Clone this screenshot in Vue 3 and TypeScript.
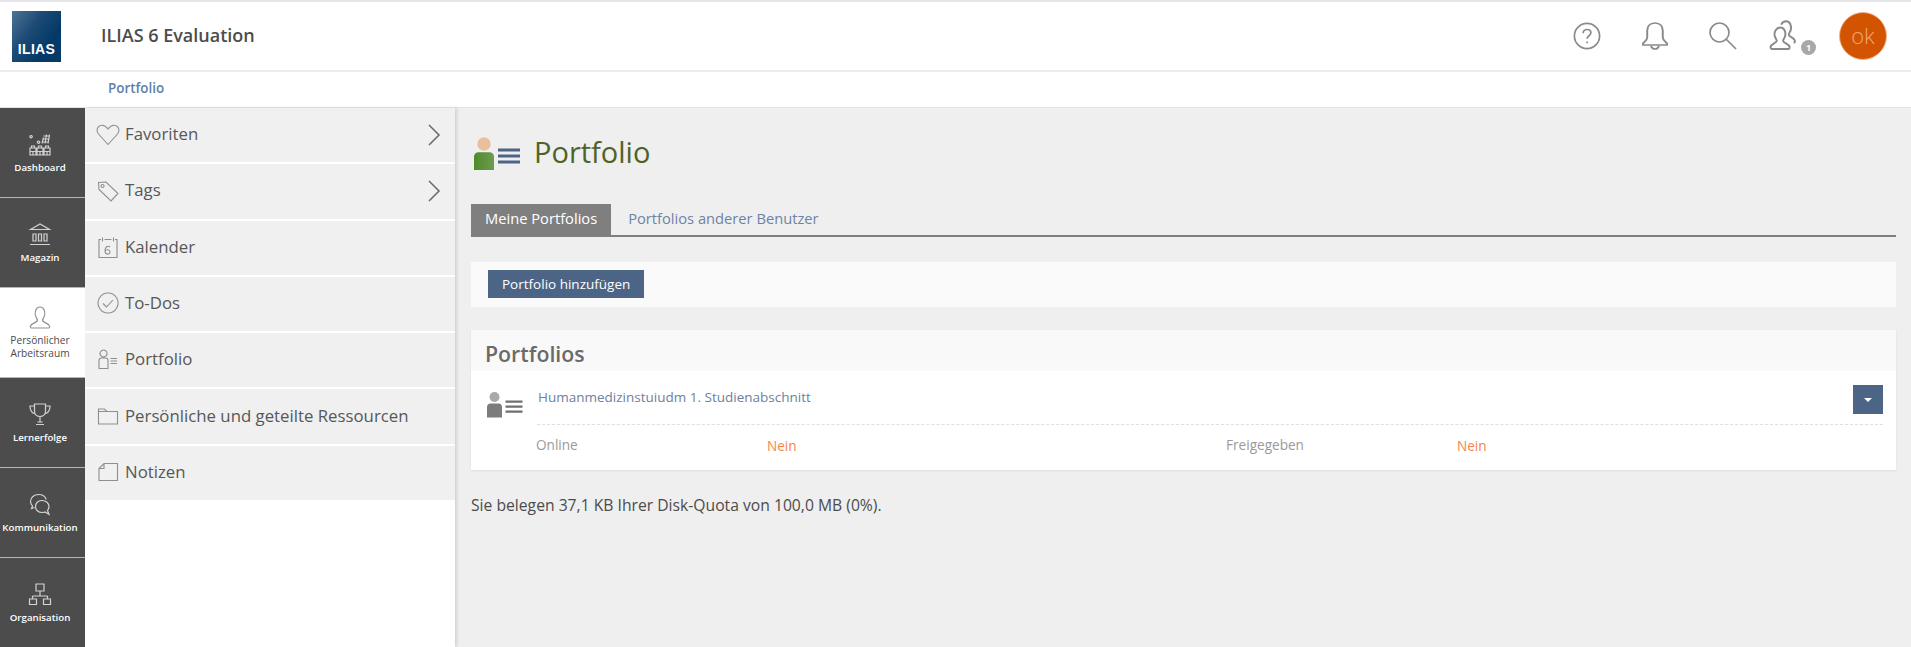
<template>
  <div class="page">
    <header class="topbar">
      <div class="logo"><span>ILIAS</span></div>
      <div class="site-title">ILIAS 6 Evaluation</div>
      <div class="meta">
        <svg class="meta-icon help" width="28" height="28" viewBox="0 0 28 28">
          <circle cx="14" cy="14" r="12.6" />
          <path d="M10.2 11.2c0-2.3 1.7-3.7 3.9-3.7s3.8 1.3 3.8 3.3c0 3-3.8 2.9-3.8 6" />
          <path d="M14.1 19.4v1.8" />
        </svg>
        <svg class="meta-icon bell" width="32" height="32" viewBox="0 0 28 32" preserveAspectRatio="none">
          <path d="M14 3c-4.600 0-6.800 3.500-6.800 7.500v7c0 2.500-2.200 4-3.700 5.800v1.700h21v-1.700c-1.500-1.800-3.700-3.300-3.700-5.800v-7C20.800 6.500 18.600 3 14 3z" />
          <path d="M10.500 26c.6 2 1.800 3 3.500 3s2.900-1 3.500-3" />
        </svg>
        <svg class="meta-icon search" width="30" height="30" viewBox="0 0 30 30">
          <circle cx="11.500" cy="11.500" r="9.500" />
          <path d="M18.500 18.500l9.500 9.500" />
        </svg>
        <div class="users">
          <svg class="meta-icon" width="34" height="34" viewBox="0 0 30 30">
            <path d="M4.500 26.500h14.500c1 0 1-1 .9-2-.5-2.500-5.200-3.200-5.700-5-.2-1 1.300-2.500 1.800-4.500.8-3.500-.8-7.500-4.300-7.500S6 11.500 6.800 15c.5 2 2 3.500 1.800 4.500-.5 1.800-4.900 2.500-5.400 5-.1 1 .3 2 1.300 2z" />
            <path d="M12.500 5c.8-1.800 2.200-3 4.300-3 3.500 0 5 4 4.200 7.500-.5 2-2 3.500-1.800 4.500.4 1.800 4.300 2.300 5.300 4.800.4 1 .2 2-1 2.200" />
          </svg>
          <span class="badge">1</span>
        </div>
        <div class="avatar">ok</div>
      </div>
    </header>

    <div class="crumbs"><a>Portfolio</a></div>

    <div class="body">
      <nav class="mainbar">
        <a v-for="item in mainItems" :key="item.label" class="main-item" :class="{ active: item.active }">
          <svg width="24" height="24" viewBox="0 0 24 24" class="main-icon">
            <path :d="item.icon" />
          </svg>
          <span>{{ item.label }}</span>
        </a>
      </nav>

      <aside class="slate">
        <a v-for="entry in slateItems" :key="entry.label" class="slate-row">
          <svg width="24" height="24" viewBox="0 0 24 24" class="slate-icon">
            <path :d="entry.icon" />
          </svg>
          <span class="slate-label">{{ entry.label }}</span>
          <svg v-if="entry.more" width="14" height="22" viewBox="0 0 14 22" class="chevron">
            <path d="M2 1l10 10L2 21" />
          </svg>
        </a>
      </aside>

      <main class="content">
        <div class="head">
          <svg class="head-icon" width="46" height="34" viewBox="0 0 46 34">
            <defs>
              <linearGradient id="torso" x1="0" y1="0" x2="1" y2="0">
                <stop offset="0" stop-color="#4d8b2b" />
                <stop offset="1" stop-color="#6f9a50" />
              </linearGradient>
            </defs>
            <circle cx="10" cy="7" r="6.700" fill="#e9bf9e" />
            <path d="M0 33V20c0-3.500 2.500-4.800 5-4.800h10c2.500 0 5 1.300 5 4.800v13z" fill="url(#torso)" />
            <path d="M24 11.500h22v3H24zM24 17.500h22v3H24zM24 23.500h22v3H24z" fill="#4c6586" />
          </svg>
          <h1>Portfolio</h1>
        </div>

        <div class="tabs">
          <a class="tab current">Meine Portfolios</a>
          <a class="tab">Portfolios anderer Benutzer</a>
        </div>

        <div class="toolbar">
          <button type="button" class="btn">Portfolio hinzufügen</button>
        </div>

        <section class="panel">
          <h2>Portfolios</h2>
          <div class="entry">
            <svg class="entry-icon" width="36" height="26" viewBox="0 0 36 26">
              <circle cx="7.500" cy="5" r="5" fill="#a9a9a9" />
              <path d="M0 25.500V15c0-2.500 1.800-3.500 3.500-3.500h8c1.700 0 3.500 1 3.500 3.500v10.500z" fill="#7c7c7c" />
              <path d="M18.500 8.500h17v2.200h-17zM18.500 13.500h17v2.200h-17zM18.500 18.500h17v2.200h-17z" fill="#6f6f6f" />
            </svg>
            <div class="entry-body">
              <div class="entry-top">
                <a class="entry-link">Humanmedizinstuiudm 1. Studienabschnitt</a>
                <button type="button" class="caret-btn"><i></i></button>
              </div>
              <div class="props">
                <span class="prop-name">Online</span>
                <span class="prop-value">Nein</span>
                <span class="prop-name">Freigegeben</span>
                <span class="prop-value">Nein</span>
              </div>
            </div>
          </div>
        </section>

        <p class="quota">Sie belegen 37,1 KB Ihrer Disk-Quota von 100,0 MB (0%).</p>
      </main>
    </div>
  </div>
</template>

<script setup lang="ts">
interface MainItem {
  label: string;
  icon: string;
  active?: boolean;
}

interface SlateItem {
  label: string;
  icon: string;
  more?: boolean;
}

const mainItems: MainItem[] = [
  {
    label: "Dashboard",
    icon: "M2 16h6v7H2zM9 16h6v7H9zM16 16h6v7h-6zM3.500 16v-2h3v2M10.500 16v-2h3v2M17.500 16v-2h3v2M2 19.500h20M5 19.500V23M12 19.500V23M19 19.500V23M3 3.500a1.200 1.200 0 1 0 .1 0zM10.500 9a1.200 1.200 0 1 0 .1 0zM14 11.500l1.500-6M17 11.500l1.500-9M20 11.500l1.500-9M14.500 7h7M14 10h7M15.500 4h6",
  },
  {
    label: "Magazin",
    icon: "M2.500 7.500L12 2l9.500 5.500zM5 12h3v7H5zM10.500 12h3v7h-3zM16 12h3v7h-3zM2 22.500h20",
  },
  {
    label: "Persönlicher Arbeitsraum",
    active: true,
    icon: "M3.500 23h17c1 0 1.200-1 1-2-.6-2.700-6.500-3.400-7-5.500-.2-1 1.500-2.800 2.100-5.100C17.500 6.300 15.700 2 12 2S6.500 6.300 7.400 10.400c.6 2.300 2.300 4.100 2.100 5.100-.5 2.100-6.400 2.800-7 5.500-.2 1 0 2 1 2z",
  },
  {
    label: "Lernerfolge",
    icon: "M6.500 2h11v7c0 3.500-2.500 5.500-5.500 5.500S6.500 12.500 6.500 9zM6.500 4H2c0 4 2 7 5.500 8M17.500 4H22c0 4-2 7-5.500 8M12 14.500V20M9.500 20h5M8 22.500h8",
  },
  {
    label: "Kommunikation",
    icon: "M6.500 15.500l-3 1 1-2.500C3 12.500 2.500 11 2.500 9.500 2.500 5.500 6 2.500 10.500 2.500c3.700 0 6.700 2 7.700 5M14 8.500c4 0 7 2.500 7 6 0 1.500-.5 2.800-1.500 3.800l1.500 4-4-2.300c-1 .4-2 .5-3 .5-3.800 0-6.500-2.700-6.500-6s2.700-6 6-6z",
  },
  {
    label: "Organisation",
    icon: "M8 2h8v7H8zM12 9v5M4.500 14h15M4.500 14v3M19.500 14v3M1.500 17h7v5.500h-7zM15.500 17h7v5.500h-7z",
  },
];

const slateItems: SlateItem[] = [
  {
    label: "Favoriten",
    more: true,
    icon: "M12 22.500L2.500 12C.2 9.200.8 5.500 3.500 4s5.500-1 8.500 3c3-4 5.800-4.500 8.500-3s3.300 5.200 1 8z",
  },
  {
    label: "Tags",
    more: true,
    icon: "M2.500 4.500l7.500-.5 12 11.500-7 7.500L3 11.500zM6.500 6.500a1.500 1.500 0 1 0 .1 0z",
  },
  {
    label: "Kalender",
    icon: "M5 4.500H3v18h18v-18h-2M8.500 4.500h7M6.500 2.500v4M17.500 2.500v4M14 12c-1.500-1.500-5-1-5 4 0 4 5 4 5 1 0-2.500-4-3-5-1",
  },
  {
    label: "To-Dos",
    icon: "M12 2a10 10 0 1 0 .1 0zM7 12.500l3.500 3.500L17 9",
  },
  {
    label: "Portfolio",
    icon: "M7.500 3a3.500 3.500 0 1 0 .1 0zM3 21.500v-8c0-2 1-2.500 2.500-2.500h4c1.500 0 2.500.5 2.500 2.500v8zM14.500 11.500H21M14.500 14H21M14.500 16.500H21",
  },
  {
    label: "Persönliche und geteilte Ressourcen",
    icon: "M2.500 20V5h6l2.500 2.500h10.500V20zM2.500 7.500h8.500",
  },
  {
    label: "Notizen",
    icon: "M8 3.500h13.500v17H3V8.500zM8 3.500v5H3",
  },
];
</script>

<style>
html,
body {
  margin: 0;
  background: #fff;
}
</style>

<style scoped>
.page {
  width: 1911px;
  height: 647px;
  overflow: hidden;
  font-family: "Open Sans", "Noto Sans", sans-serif;
  color: #4c4c4c;
}

.topbar {
  height: 72px;
  box-sizing: border-box;
  border-top: 2px solid #e5e5ea;
  border-bottom: 2px solid #ececec;
  display: flex;
  align-items: center;
  padding-left: 12px;
  background: #fff;
}

.logo {
  width: 49px;
  height: 51px;
  box-sizing: border-box;
  background: linear-gradient(125deg, #4f7496 0%, #1c4a75 38%, #043a68 70%);
  display: flex;
  align-items: flex-end;
  justify-content: center;
  padding-bottom: 5px;
  color: #fff;
  font: 700 14px "Liberation Sans", Arial, sans-serif;
  letter-spacing: 0.3px;
}

.site-title {
  margin-left: 40px;
  margin-top: -2px;
  font-size: 18px;
  font-weight: 600;
  color: #4c4c4c;
}

.meta {
  margin-left: auto;
  display: flex;
  align-items: center;
  padding-right: 24px;
}

.meta-icon {
  display: block;
  fill: none;
  stroke: #8a8a8a;
  stroke-width: 1.7;
}

.help {
  margin-right: 38px;
}

.bell {
  margin-right: 37px;
}

.search {
  margin-right: 29px;
}

.users {
  position: relative;
  width: 34px;
  height: 34px;
  margin-right: 38px;
}

.badge {
  position: absolute;
  right: -15px;
  bottom: -2px;
  width: 15px;
  height: 15px;
  border-radius: 50%;
  background: #a8a8a8;
  color: #fff;
  font-size: 9px;
  font-weight: 700;
  line-height: 15px;
  text-align: center;
}

.avatar {
  width: 48px;
  height: 48px;
  box-sizing: border-box;
  border-radius: 50%;
  background: #d35400;
  border: 1px solid #f0b48c;
  color: #f0a878;
  font-size: 22px;
  font-weight: 300;
  line-height: 45px;
  text-align: center;
}

.crumbs {
  height: 36px;
  box-sizing: border-box;
  border-bottom: 1px solid #e4e4e4;
  padding-left: 108px;
  line-height: 33px;
  font-size: 13.4px;
  font-weight: 600;
  color: #5f7fa8;
}

.body {
  display: flex;
  height: 539px;
}

.mainbar {
  width: 85px;
  flex: none;
  background: #4c4c4c;
}

.main-item {
  height: 90px;
  box-sizing: border-box;
  border-bottom: 1px solid #b5b5b5;
  display: flex;
  flex-direction: column;
  align-items: center;
  justify-content: center;
  gap: 5px;
  padding: 0 5px 0 0;
  color: #fff;
  font-size: 9.7px;
  font-weight: 600;
  line-height: 13px;
  text-align: center;
}

.main-item:last-child {
  border-bottom: 0;
}

.main-item.active {
  background: #fff;
  color: #4c4c4c;
  font-weight: 400;
  font-size: 10.2px;
  padding: 0 14px 0 9px;
}

.main-icon {
  flex: none;
  fill: none;
  stroke: #d2d2d2;
  stroke-width: 1.2;
}

.main-item.active .main-icon {
  stroke: #8f8f8f;
}

.slate {
  width: 370px;
  flex: none;
  background: #fff;
  box-shadow: 2px 0 3px rgba(0, 0, 0, 0.12);
  position: relative;
}

.slate-row {
  height: 54.3px;
  margin-bottom: 2px;
  background: #f0f0f0;
  display: flex;
  align-items: center;
  padding-left: 11px;
  padding-right: 14px;
  font-size: 16.8px;
  color: #575757;
}

.slate-icon {
  flex: none;
  fill: none;
  stroke: #8f8f8f;
  stroke-width: 1.1;
  margin-right: 5px;
  margin-top: -2px;
}

.slate-label {
  flex: 1;
  margin-top: -3px;
}

.chevron {
  fill: none;
  stroke: #6a6a6a;
  stroke-width: 1.5;
}

.content {
  flex: 1;
  min-width: 0;
  box-sizing: border-box;
  padding: 0 15px 0 16px;
  background: #efefef;
}

.head {
  display: flex;
  align-items: center;
  gap: 14px;
  height: 60px;
  margin: 14px 0 22px 3px;
}

.head-icon {
  margin-top: 3px;
}

.head h1 {
  margin: -2px 0 0;
  font-size: 29px;
  font-weight: 400;
  color: #4f6328;
}

.tabs {
  display: flex;
  height: 31px;
  border-bottom: 2px solid #7f7f7f;
}

.tab {
  padding: 0 14px;
  font-size: 14.7px;
  line-height: 29px;
  color: #6d83a6;
}

.tab + .tab {
  padding-left: 17px;
}

.tab.current {
  height: 31px;
  background: #7f7f7f;
  color: #fff;
}

.toolbar {
  margin-top: 25px;
  height: 45px;
  box-sizing: border-box;
  background: #fafafa;
  padding: 8px 17px;
}

.btn {
  display: block;
  height: 28px;
  padding: 0 14px;
  border: 0;
  background: #4c6586;
  color: #fff;
  font: 400 13.5px "Open Sans", sans-serif;
}

.panel {
  margin-top: 23px;
  background: #fff;
  box-shadow: 0 1px 2px rgba(0, 0, 0, 0.08);
}

.panel h2 {
  margin: 0;
  height: 41px;
  box-sizing: border-box;
  padding: 4px 0 0 14px;
  background: #f9f9f9;
  font-size: 21.3px;
  font-weight: 600;
  line-height: 40px;
  color: #6a6a6a;
}

.entry {
  display: flex;
  height: 99px;
  padding: 14px 13px 0 16px;
  box-sizing: border-box;
}

.entry-icon {
  flex: none;
  margin: 7px 14px 0 0;
}

.entry-body {
  flex: 1;
  min-width: 0;
}

.entry-top {
  display: flex;
  justify-content: space-between;
  height: 39px;
  border-bottom: 1px dashed #dfdfdf;
}

.entry-link {
  font-size: 13.5px;
  line-height: 24px;
  color: #6d7f9e;
  padding-left: 1px;
}

.caret-btn {
  width: 30px;
  height: 29px;
  border: 0;
  padding: 0;
  background: #4c6586;
  display: flex;
  align-items: center;
  justify-content: center;
}

.caret-btn i {
  width: 0;
  height: 0;
  border-left: 4px solid transparent;
  border-right: 4px solid transparent;
  border-top: 4px solid #fff;
}

.props {
  display: grid;
  grid-template-columns: 230px 460px 230px 1fr;
  margin-top: 10px;
  font-size: 13.6px;
  line-height: 20px;
}

.prop-name {
  color: #9a9a9a;
  margin-left: -1px;
}

.prop-value {
  color: #f4874f;
  margin-top: 1px;
}

.quota {
  margin: 25px 0 0;
  font-size: 15.7px;
  line-height: 20px;
  color: #4c4c4c;
}
</style>
